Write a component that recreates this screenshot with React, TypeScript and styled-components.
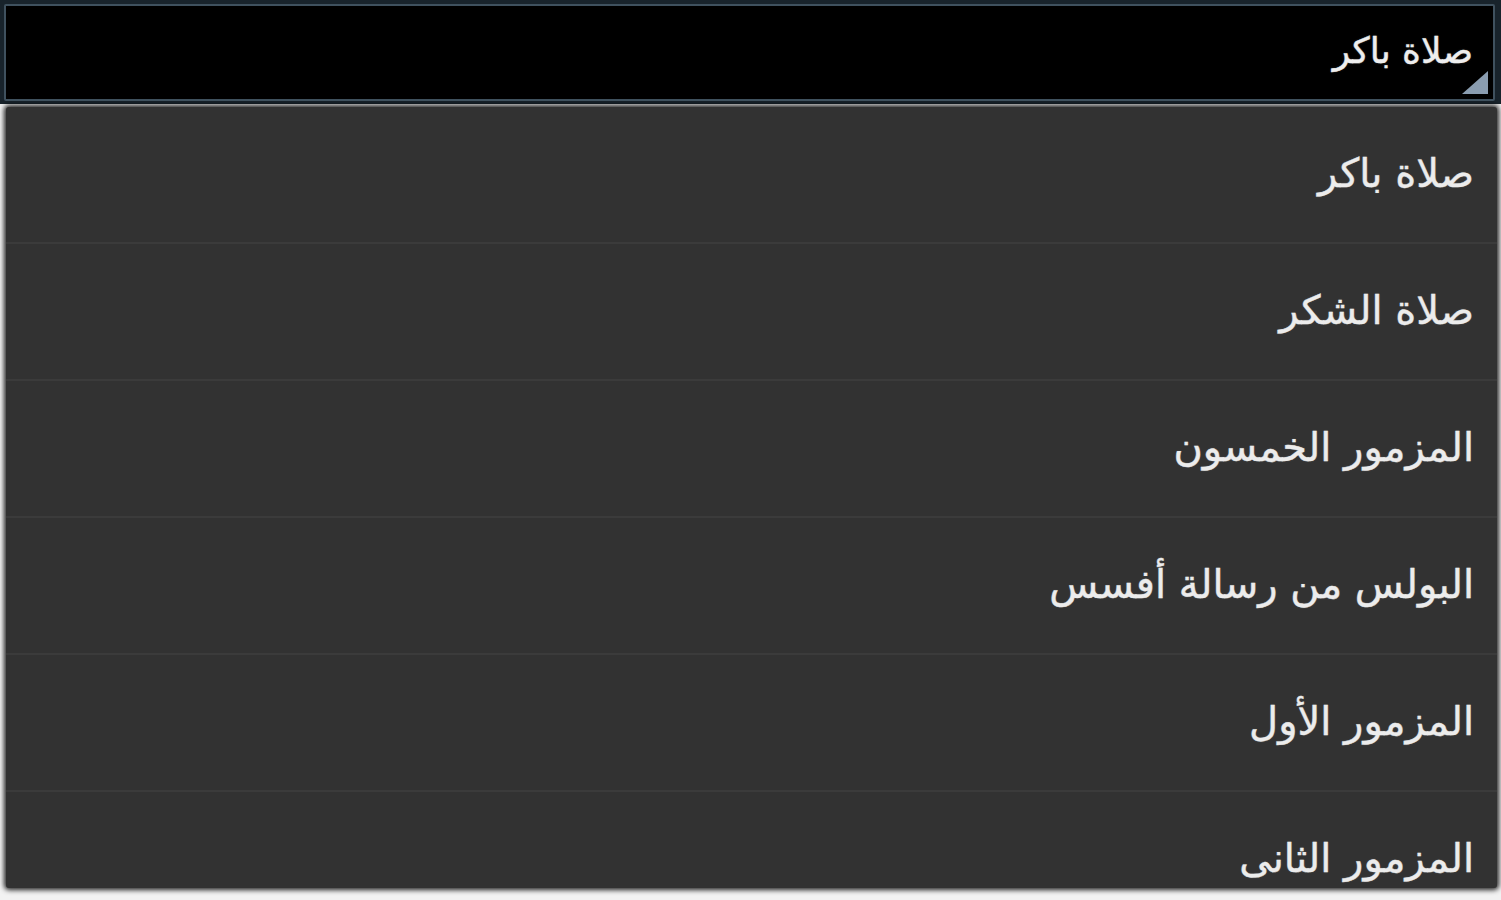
import styled, { createGlobalStyle } from "styled-components"

const GlobalStyle = createGlobalStyle`
	html, body {
		margin: 0;
		padding: 0;
		background: #f2f2f2;
		font-family: "DejaVu Sans", "Noto Sans", sans-serif;
		overflow: hidden;
	}
`

const prayers = [
	"صلاة باكر",
	"صلاة الشكر",
	"المزمور الخمسون",
	"البولس من رسالة أفسس",
	"المزمور الأول",
	"المزمور الثانى",
]

const App = () => {
	return (
		<Screen>
			<GlobalStyle />
			<SpinnerBar>
				<SpinnerField>
					<SpinnerText dir="rtl">{prayers[0]}</SpinnerText>
					<Corner />
				</SpinnerField>
			</SpinnerBar>
			<DropList>
				{prayers.map((p) => (
					<Row key={p}>
						<RowText dir="rtl">{p}</RowText>
					</Row>
				))}
			</DropList>
		</Screen>
	)
}

const Screen = styled.div`
	width: 1501px;
	height: 900px;
	display: flex;
	flex-direction: column;
	overflow: hidden;
`

const SpinnerBar = styled.div`
	height: 104px;
	box-sizing: border-box;
	padding: 4px 6px 3px 4px;
	background: #18232b;
	display: flex;
`

const SpinnerField = styled.div`
	flex: 1;
	position: relative;
	display: flex;
	align-items: center;
	justify-content: flex-end;
	padding-right: 20px;
	padding-bottom: 4px;
	background: #000;
	border: 2px solid #3f515e;
	border-radius: 2px;
`

const SpinnerText = styled.span`
	color: #eeeeee;
	font-size: 36px;
	-webkit-text-stroke: .4px #eeeeee;
	text-shadow: 0 0 2px rgba(255, 255, 255, .25);
`

// little spinner arrow in the bottom right corner
const Corner = styled.div`
	position: absolute;
	right: 5px;
	bottom: 5px;
	width: 0;
	height: 0;
	border-left: 26px solid transparent;
	border-bottom: 23px solid #8a9db0;
`

const DropList = styled.div`
	margin: 3px 4px 0 6px;
	height: 781px;
	background: #323232;
	border-radius: 3px;
	box-shadow: 0 0 5px 2px rgba(0, 0, 0, .85);
	overflow: hidden;
`

const Row = styled.div`
	height: 137px;
	box-sizing: border-box;
	display: flex;
	align-items: center;
	justify-content: flex-end;
	padding-right: 23px;
	padding-bottom: 4px;
	border-bottom: 2px solid #3b3b3b;
`

const RowText = styled.span`
	color: #ececec;
	font-size: 40px;
	-webkit-text-stroke: .4px #ececec;
	text-shadow: 0 0 2px rgba(255, 255, 255, .2);
`

export default App
